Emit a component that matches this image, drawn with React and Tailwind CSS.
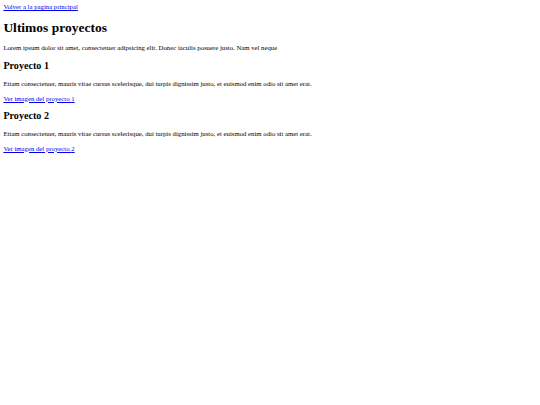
import React from "react";

const proyectos = [
  { id: 1, titulo: "Proyecto 1" },
  { id: 2, titulo: "Proyecto 2" },
];

const linkClass = "text-[#0000ee] underline";

const App = () => {
  return (
    <div className="min-h-screen bg-white p-[3.375px] font-['Liberation_Serif',serif] text-[6.75px] leading-[7.5px] text-black">
      <a href="#" className={linkClass}>
        Volver a la pagina principal
      </a>
      <h1 className="my-[9.05px] text-[13.5px] leading-[15.5px] font-bold">
        Ultimos proyectos
      </h1>
      <p className="my-[6.75px]">
        Lorem ipsum dolor sit amet, consectetuer adipsicing elit. Donec iaculis
        posuere justo. Nam vel neque
      </p>

      {proyectos.map((p) => (
        <div key={p.id}>
          <h2 className="my-[8.4px] text-[10.125px] leading-[11.5px] font-bold">
            {p.titulo}
          </h2>
          <p className="my-[6.75px]">
            Etiam consectetuer, mauris vitae cursus scelerisque, dui turpis
            dignissim justo, et euismod enim odio sit amet erat.
          </p>
          <p className="my-[6.75px]">
            <a href="#" className={linkClass}>
              Ver imagen del proyecto {p.id}
            </a>
          </p>
        </div>
      ))}
    </div>
  );
};

export default App;
